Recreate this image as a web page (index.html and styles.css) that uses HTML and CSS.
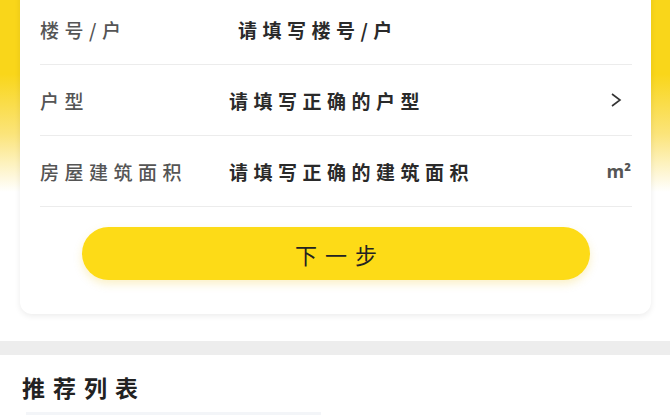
FILE: index.html
```html
<!DOCTYPE html>
<html lang="zh-CN">
<head>
  <meta charset="UTF-8" />
  <meta name="viewport" content="width=device-width, initial-scale=1.0"/>
  <title>房屋估价</title>
  <link rel="stylesheet" href="styles.css">
</head>
<body>
  <div class="top">
    <div class="form-card">
      <div class="form-row">
        <span class="label">楼号/户</span>
        <span class="value value-indent">请填写楼号/户</span>
      </div>
      <div class="form-row">
        <span class="label">户型</span>
        <span class="value">请填写正确的户型</span>
        <svg class="arrow" viewBox="0 0 12 16"><path d="M2 2l8 6-8 6"/></svg>
      </div>
      <div class="form-row">
        <span class="label">房屋建筑面积</span>
        <span class="value">请填写正确的建筑面积</span>
        <span class="unit">m²</span>
      </div>
      <button class="next-btn">下一步</button>
    </div>
  </div>

  <div class="divider"></div>

  <section class="recommend">
    <h2 class="section-title">推荐列表</h2>
    <div class="recommend-item"></div>
  </section>
</body>
</html>
```

FILE: styles.css
```css
* { margin: 0; padding: 0; box-sizing: border-box; }
body {
  font-family: "Noto Sans CJK SC", "Noto Sans", sans-serif;
  background: #fff;
  color: #333;
  width: 670px;
  height: 415px;
  overflow: hidden;
}
.top {
  background: linear-gradient(to bottom, #f9d61a 0, #f9d61a 80px, #fbe47a 140px, #ffffff 198px);
  padding: 0 19px 27px 20px;
}
.form-card {
  margin-top: -6px;
  background: #fff;
  border-radius: 0 0 12px 12px;
  padding: 0 19px 34px 20px;
  box-shadow: 0 2px 6px rgba(0, 0, 0, 0.08);
}
.form-row {
  display: flex;
  align-items: center;
  height: 71px;
  border-bottom: 1px solid #ececec;
}
.label {
  width: 189px;
  flex-shrink: 0;
  font-size: 19px;
  letter-spacing: 5.5px;
  font-weight: 500;
  color: #555;
}
.value {
  flex: 1;
  font-size: 19px;
  letter-spacing: 5.5px;
  font-weight: bold;
  color: #2a2a2a;
}
.value-indent { padding-left: 9px; }
.arrow {
  width: 12px;
  height: 16px;
  margin-right: 10px;
  fill: none;
  stroke: #333;
  stroke-width: 1.6;
}
.unit {
  font-family: "Open Sans", sans-serif;
  font-size: 18px;
  font-weight: bold;
  color: #555;
  margin-right: 1px;
}
.next-btn {
  display: block;
  width: 508px;
  height: 53px;
  margin: 20px auto 0;
  border: none;
  border-radius: 27px;
  background: #fddb17;
  box-shadow: 0 4px 8px rgba(240, 200, 30, 0.25);
  font-family: "Noto Sans CJK SC", sans-serif;
  font-size: 22px;
  letter-spacing: 8px;
  text-indent: 8px;
  color: #222;
  cursor: pointer;
}
.divider {
  height: 14px;
  background: #ededed;
}
.recommend { padding: 20px 22px 0; }
.section-title {
  font-size: 23px;
  letter-spacing: 8px;
  font-weight: bold;
  color: #222;
  line-height: 24px;
}
.recommend-item {
  margin: 13px 0 0 4px;
  width: 295px;
  height: 4px;
  background: #f3f5f8;
}
```
